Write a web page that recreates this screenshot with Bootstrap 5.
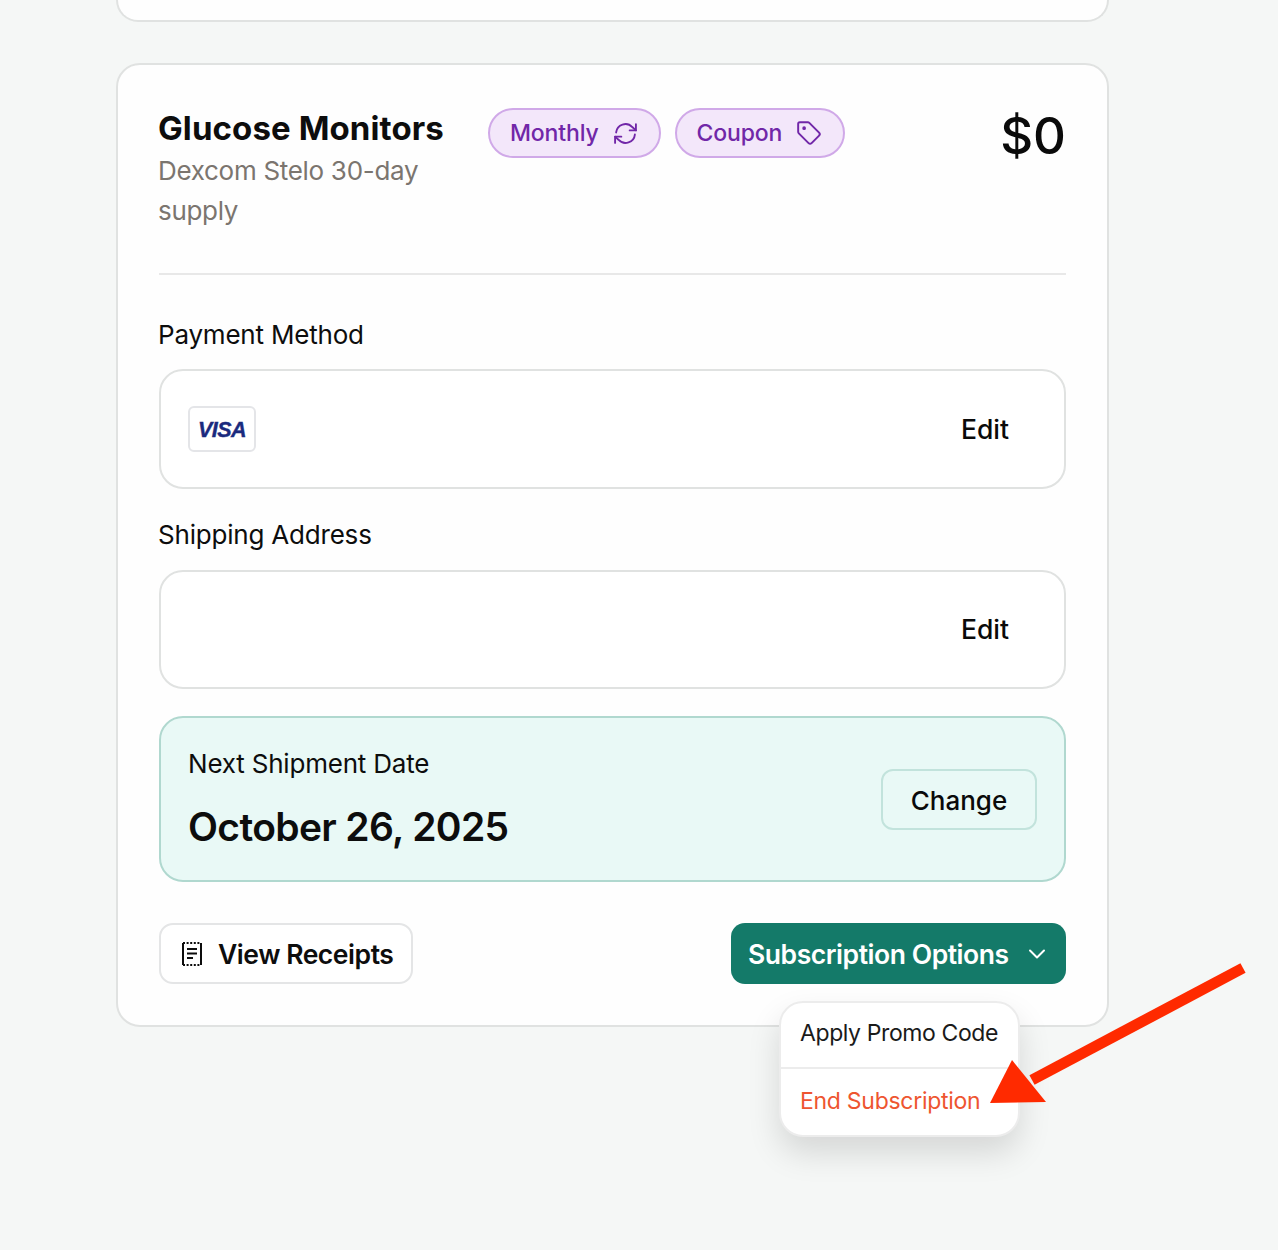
<!doctype html>
<html lang="en">
<head>
<meta charset="utf-8">
<title>Subscription</title>
<link href="https://cdn.jsdelivr.net/npm/bootstrap@5.3.0/dist/css/bootstrap.min.css" rel="stylesheet">
<style>
html,body{height:1250px;overflow:hidden}
body{background:#f5f7f6;font-family:Inter,"Liberation Sans",sans-serif;color:#0d0d0d;position:relative}
.page-wrap{width:993px;margin-left:116px}
.stub-card{height:22px;background:#fefefe;border:2px solid #e0e2e1;border-top:0;border-radius:0 0 24px 24px}
.sub-card{margin-top:41px;height:964px;background:#fefefe;border:2px solid #e0e2e1;border-radius:24px;padding:41px 41px 0}
.head-row{height:167px}
.title-col{width:284px;margin-left:-1px;margin-right:46px}
.item-title{font-size:33px;line-height:45px;font-weight:700;letter-spacing:.1px;margin:0;white-space:nowrap}
.item-sub{font-size:26px;line-height:40px;color:#7b756f;letter-spacing:-.3px;margin:0}
.pill-row{gap:14px;margin-top:2px}
.pill{height:50px;border:2px solid #d0a9e8;background:#f3e7fa;color:#7127a8;border-radius:25px;padding:0 21px 0 20px;font-size:23px;font-weight:500;letter-spacing:-.15px;gap:14px}
.price{font-size:51px;line-height:56px;font-weight:500;color:#0a0a0a;margin-top:2px}
.divider{height:2px;background:#e8e8e8}
.sec-label{font-size:26px;line-height:36px;letter-spacing:-.2px;margin:0 0 0 -1px}
.label-a{margin-top:42px;margin-bottom:16px}
.label-b{margin-top:28px;margin-bottom:17px}
.field-box{height:120px;background:#fff;border:2px solid #e0e2e1;border-radius:24px;padding:1px 55px 0 27px}
.field-short{height:119px}
.edit-txt{font-size:26.500px;font-weight:500;letter-spacing:0;color:#0a0a0a}
.visa-tag{width:68px;height:46px;border:2px solid #e4e5e8;border-radius:6px;background:#fff;color:#1a2a7e;font:italic 700 21.500px "Liberation Sans",sans-serif;letter-spacing:-.6px;-webkit-text-stroke:.4px #1a2a7e;padding-top:2px;margin-top:-1px}
.ship-box{height:166px;margin-top:27px;background:#e9f9f6;border:2px solid #b0d8cf;border-radius:24px;padding:0 27px}
.ship-text{padding-bottom:2px}
.ship-label{font-size:26px;line-height:36px;letter-spacing:-.2px;margin:0 0 21px}
.ship-date{font-size:39px;line-height:48px;font-weight:600;letter-spacing:-.65px;margin:0}
.change-btn{width:156px;height:61px;border:2px solid #c2e3dc;border-radius:12px;background:#e9f9f6;font-size:26px;font-weight:500;color:#0a0a0a;padding:3px 0 0}
.action-row{margin-top:41px}
.btn-txt{padding-top:3px}
.receipt-btn{width:254px;height:61px;border:2px solid #e4e5e6;border-radius:14px;background:#fff;font-size:26.500px;font-weight:600;letter-spacing:-.45px;color:#0d0d0d;gap:15px;padding:0 0 0 20px}
.options-btn{width:335px;height:61px;border:0;border-radius:14px;background:#147a69;color:#fff;font-size:26.500px;font-weight:600;letter-spacing:-.45px;padding:0 20px 0 17px}
.options-btn:hover,.options-btn:active{background:#147a69!important;color:#fff!important}
.opt-menu{display:block;position:absolute;top:78px;right:46px;width:241px;height:136px;padding:0;border:2px solid #ececec;border-radius:24px;background:#fff;box-shadow:0 16px 32px rgba(0,0,0,.13);overflow:hidden}
.opt-item{padding:0 0 0 19px;font-size:23px;letter-spacing:-.4px;color:#1a1a1a;display:flex;align-items:center;white-space:nowrap}
.opt-first{height:64px;padding-bottom:4px}
.opt-danger{height:66px;border-top:2px solid #ececec;color:#ee5530;letter-spacing:-.28px}
.arrow-mark{position:absolute;left:0;top:0;pointer-events:none;z-index:1100}
</style>
</head>
<body>
<div class="page-wrap">
  <div class="stub-card"></div>
  <div class="sub-card">
    <div class="d-flex align-items-start head-row">
      <div class="title-col">
        <h2 class="item-title">Glucose Monitors</h2>
        <p class="item-sub">Dexcom Stelo 30-day supply</p>
      </div>
      <div class="d-flex pill-row">
        <span class="pill d-inline-flex align-items-center">Monthly
          <svg width="25" height="25" viewBox="0 0 24 24" fill="none" stroke="#7127a8" stroke-width="1.800" stroke-linecap="round" stroke-linejoin="round"><path d="M22 3v6h-6"/><path d="M2 21v-6h6"/><path d="M3 11a9 9 0 0 1 15.500-5.200L22 9"/><path d="M2 15l3.500 3.200A9 9 0 0 0 21 13"/></svg>
        </span>
        <span class="pill d-inline-flex align-items-center">Coupon
          <svg width="26" height="26" viewBox="0 0 24 24" fill="none" stroke="#7127a8" stroke-width="1.800" stroke-linecap="round" stroke-linejoin="round"><path d="M2 3.500A1.500 1.500 0 0 1 3.500 2h7.400a2 2 0 0 1 1.400.6l9 9a2 2 0 0 1 0 2.800l-6.900 6.900a2 2 0 0 1-2.800 0l-9-9a2 2 0 0 1-.6-1.400z"/><circle cx="7.500" cy="7.500" r=".8" fill="#7127a8"/></svg>
        </span>
      </div>
      <div class="price ms-auto">$0</div>
    </div>
    <div class="divider"></div>
    <p class="sec-label label-a">Payment Method</p>
    <div class="field-box d-flex align-items-center justify-content-between">
      <span class="visa-tag d-inline-flex align-items-center justify-content-center">VISA</span>
      <span class="edit-txt">Edit</span>
    </div>
    <p class="sec-label label-b">Shipping Address</p>
    <div class="field-box field-short d-flex align-items-center justify-content-end">
      <span class="edit-txt">Edit</span>
    </div>
    <div class="ship-box d-flex align-items-center justify-content-between">
      <div class="ship-text">
        <p class="ship-label">Next Shipment Date</p>
        <p class="ship-date">October 26, 2025</p>
      </div>
      <button type="button" class="btn change-btn">Change</button>
    </div>
    <div class="d-flex justify-content-between action-row">
      <button type="button" class="btn receipt-btn d-inline-flex align-items-center">
        <svg width="22" height="26" viewBox="0 0 22 26" fill="none" stroke="#0d0d0d" stroke-width="2"><path d="M2 2v22M20 2v22"/><path d="M2 2h18M2 24h18" stroke-dasharray="2 1.600"/><path d="M6 8h10M6 12.500h10M6 17h6"/></svg>
        <span class="btn-txt">View Receipts</span>
      </button>
      <div class="position-relative">
        <button type="button" class="btn options-btn d-flex align-items-center justify-content-between"><span class="btn-txt">Subscription Options</span>
          <svg width="18" height="12" viewBox="0 0 18 12" fill="none" stroke="#fff" stroke-width="2" stroke-linecap="round" stroke-linejoin="round"><path d="M2 2.500l7 7 7-7"/></svg>
        </button>
        <ul class="dropdown-menu opt-menu list-unstyled">
          <li class="opt-item opt-first">Apply Promo Code</li>
          <li class="opt-item opt-danger">End Subscription</li>
        </ul>
      </div>
    </div>
  </div>
</div>
<svg class="arrow-mark" width="1278" height="1250" viewBox="0 0 1278 1250"><path d="M1243 968L1032 1080" stroke="#ff2a00" stroke-width="11" fill="none"/><path d="M1012 1060L1046 1102L990 1103Z" fill="#ff2a00"/></svg>
</body>
</html>
